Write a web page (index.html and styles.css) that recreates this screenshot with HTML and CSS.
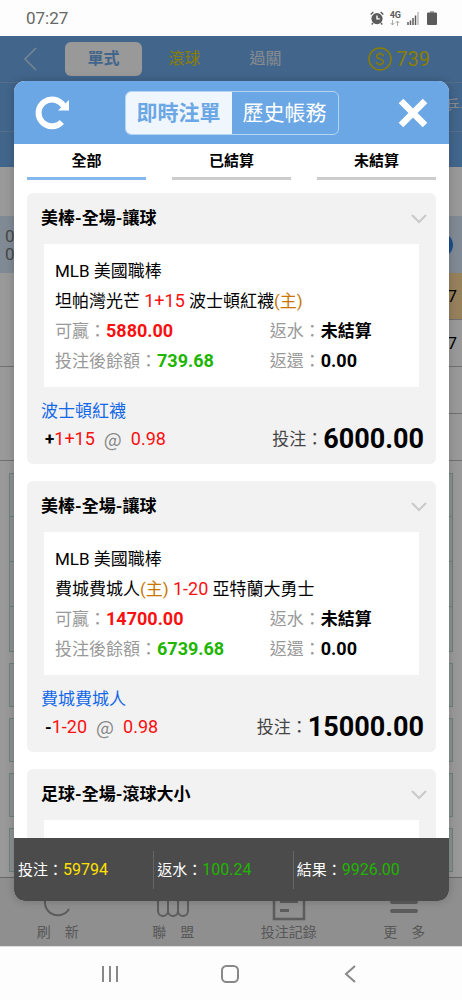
FILE: index.html
```html
<!DOCTYPE html>
<html lang="zh-Hant">
<head>
<meta charset="utf-8">
<meta name="viewport" content="width=device-width, initial-scale=1">
<title>即時注單</title>
<link rel="stylesheet" href="styles.css">
</head>
<body>
<header class="status">
  <time>07:27</time>
  <div class="status-icons">
    <svg class="alarm" viewBox="0 0 14 14"><circle cx="7" cy="7.6" r="5.6" fill="#5b5b5b"/><path d="M.7 3.6 3.4 1M13.3 3.6 10.6 1M3 12l-1.3 1.5M11 12l1.3 1.5" stroke="#5b5b5b" stroke-width="1.4"/><path d="M7 4.4v3.5h2.8" fill="none" stroke="#fff" stroke-width="1.4"/></svg>
    <div class="network"><b>4G</b><svg viewBox="0 0 10 6"><path d="M2.5 0v5M.7 3l1.8 2 1.8-2M7.5 6V1M5.7 3l1.8-2 1.8 2" fill="none" stroke="#aaa"/></svg></div>
    <svg class="signal" viewBox="0 0 12 13"><path d="M1 13v-3M3.5 13V8.500M6 13V6M8.500 13V3.500" stroke="#5b5b5b" stroke-width="1.5"/><path d="M11 13V0" stroke="#bbb" stroke-width="1.500"/></svg>
    <svg class="battery" viewBox="0 0 10 14"><rect x="3" width="4" height="2" fill="#aaa"/><rect y="1.500" width="10" height="12.500" rx="1" fill="#5b5b5b"/></svg>
  </div>
</header>

<main class="app">
  <div class="page">
    <nav class="topbar">
      <button class="back" aria-label="返回"><svg viewBox="0 0 14 24"><path d="M13 1 2 12l11 11" fill="none" stroke="#c9def5" stroke-width="1.500"/></svg></button>
      <button class="mode mode-on">單式</button>
      <button class="mode mode-live">滾球</button>
      <button class="mode">過關</button>
      <div class="coins"><svg viewBox="0 0 24 24"><circle cx="12" cy="12" r="11" fill="none" stroke="#e6d200" stroke-width="1.500"/><path d="M15.500 9.300c0-3.300-7-3.300-7 0 0 3.300 7 2 7 5.400 0 3.500-7.200 3.500-7.200-.2M12 5v2M12 17v2" fill="none" stroke="#e6d200" stroke-width="1.400"/></svg>739</div>
    </nav>
    <div class="sports">乒乓</div>
    <div class="subbar"></div>
    <div class="blank"></div>
    <div class="match"><span>0<br>0</span><i class="dot"></i></div>
    <div class="odds">
      <div class="team"></div><div class="odd picked">7</div><div class="odd">7</div>
      <div class="team"></div><div class="odd"></div><div class="odd"></div>
    </div>
    <div class="markets">
      <div class="market"><p></p><p></p><p></p><p></p></div>
      <div class="market"><p></p></div>
      <div class="market"><p></p></div>
      <div class="market"><p></p></div>
      <div class="market"><p></p></div>
    </div>
    <nav class="tabbar">
      <button><svg viewBox="0 0 36 34"><path d="M27 5A13 13 0 1 0 29 21M28 0v7h-7" fill="none" stroke="#999" stroke-width="2"/></svg>刷　新</button>
      <button><svg viewBox="0 0 36 34"><g fill="none" stroke="#999" stroke-width="2"><rect x="3" y="2" width="10" height="26" rx="5"/><rect x="13" y="2" width="10" height="26" rx="5"/><rect x="23" y="2" width="10" height="26" rx="5"/></g></svg>聯　盟</button>
      <button><svg viewBox="0 0 36 34"><path d="M3 2h30v29H3z" fill="none" stroke="#999" stroke-width="2.500"/><path d="M9 13.500h18M9 22.500h9" stroke="#999" stroke-width="3"/></svg>投注記錄</button>
      <button><svg viewBox="0 0 36 34"><path d="M6 5h24M6 14h24M6 23h24" stroke="#999" stroke-width="4" stroke-linecap="round"/></svg>更　多</button>
    </nav>
  </div>
  <div class="shade"></div>

  <section class="dialog" role="dialog" aria-label="即時注單">
    <header class="dialog-head">
      <button class="icon-btn" aria-label="重新整理"><svg viewBox="0 0 34 34"><path d="M26.800 26A13.400 13.400 0 1 1 28.500 10" fill="none" stroke="#fff" stroke-width="6"/><path d="M34 4v10.500H23z" fill="#fff"/></svg></button>
      <div class="segments"><button class="on">即時注單</button><button>歷史帳務</button></div>
      <button class="icon-btn close" aria-label="關閉"><svg viewBox="0 0 30 30"><path d="m3 3 24 24M27 3 3 27" stroke="#fff" stroke-width="6.500"/></svg></button>
    </header>
    <nav class="filters"><button class="on">全部</button><button>已結算</button><button>未結算</button></nav>

    <div class="list">
      <article class="card">
        <header><h2>美棒-全場-讓球</h2><svg viewBox="0 0 16 10"><path d="m1 1 7 7 7-7" fill="none" stroke="#c9c9c9" stroke-width="2"/></svg></header>
        <div class="detail">
          <p class="wide">MLB 美國職棒</p>
          <p class="wide">坦帕灣光芒 <span class="red">1+15</span> 波士頓紅襪<span class="home">(主)</span></p>
          <p class="label">可贏：<b class="red">5880.00</b></p><p class="label">返水：<b>未結算</b></p>
          <p class="label">投注後餘額：<b class="green">739.68</b></p><p class="label">返還：<b class="num">0.00</b></p>
        </div>
        <footer>
          <div><p class="pick">波士頓紅襪</p><p class="price"><b>+</b><span class="red">1+15</span><span class="at">@</span><span class="red">0.98</span></p></div>
          <p class="stake">投注：<b>6000.00</b></p>
        </footer>
      </article>
      <article class="card">
        <header><h2>美棒-全場-讓球</h2><svg viewBox="0 0 16 10"><path d="m1 1 7 7 7-7" fill="none" stroke="#c9c9c9" stroke-width="2"/></svg></header>
        <div class="detail">
          <p class="wide">MLB 美國職棒</p>
          <p class="wide">費城費城人<span class="home">(主)</span> <span class="red">1-20</span> 亞特蘭大勇士</p>
          <p class="label">可贏：<b class="red">14700.00</b></p><p class="label">返水：<b>未結算</b></p>
          <p class="label">投注後餘額：<b class="green">6739.68</b></p><p class="label">返還：<b class="num">0.00</b></p>
        </div>
        <footer>
          <div><p class="pick">費城費城人</p><p class="price"><b>-</b><span class="red">1-20</span><span class="at">@</span><span class="red">0.98</span></p></div>
          <p class="stake">投注：<b>15000.00</b></p>
        </footer>
      </article>
      <article class="card">
        <header><h2>足球-全場-滾球大小</h2><svg viewBox="0 0 16 10"><path d="m1 1 7 7 7-7" fill="none" stroke="#c9c9c9" stroke-width="2"/></svg></header>
        <div class="detail"></div>
      </article>
    </div>

    <footer class="totals">
      <div>投注：<span class="yellow">59794</span></div>
      <div>返水：<span class="gain">100.24</span></div>
      <div>結果：<span class="gain">9926.00</span></div>
    </footer>
  </section>
</main>

<nav class="system">
  <button aria-label="最近"><svg viewBox="0 0 18 18"><path d="M2 1v16M9 1v16M16 1v16" stroke="#888" stroke-width="2"/></svg></button>
  <button aria-label="主畫面"><svg viewBox="0 0 18 18"><rect x="1" y="1" width="16" height="16" rx="4.500" fill="none" stroke="#888" stroke-width="2"/></svg></button>
  <button aria-label="返回"><svg viewBox="0 0 18 18"><path d="M14 1 5 9l9 8" fill="none" stroke="#888" stroke-width="2"/></svg></button>
</nav>
</body>
</html>
```

FILE: styles.css
```css
* { box-sizing: border-box; }
body {
  margin: 0;
  height: 100vh;
  display: flex;
  flex-direction: column;
  overflow: hidden;
  background: #fdfdfd;
  color: #000;
  font: 17px/30px Roboto, "Noto Sans CJK TC", sans-serif;
}
button {
  border: 0;
  padding: 0;
  margin: 0;
  background: none;
  color: inherit;
  font: inherit;
}
p, h2 { margin: 0; }
svg { display: block; flex: none; }

.status {
  flex: none;
  height: 36px;
  display: flex;
  align-items: center;
  justify-content: space-between;
  padding: 0 25px 0 26px;
  color: #666;
}
.status-icons { display: flex; align-items: center; gap: 6px; }
.alarm { width: 14px; height: 14px; }
.network { font-size: 9px; line-height: 10px; color: #5b5b5b; }
.network svg { width: 10px; height: 6px; }
.signal { width: 12px; height: 13px; }
.battery { width: 10px; height: 14px; margin-left: 2px; }

.app { position: relative; flex: 1; min-height: 0; }
.page { height: 100%; display: flex; flex-direction: column; background: #fff; overflow: hidden; }
.shade { position: absolute; inset: 0; background: rgba(0, 0, 0, .4); }

.topbar {
  flex: none;
  height: 46px;
  display: flex;
  align-items: center;
  gap: 4px;
  padding-right: 32px;
  background: #6ea9e8;
  color: #e0e8f0;
}
.back { width: 61px; padding-left: 23px; }
.back svg { width: 14px; height: 24px; }
.mode { width: 77px; height: 34px; border-radius: 6px; font-size: 16px; line-height: 34px; }
.mode-on { background: #fff; color: #6ea9e8; font-weight: 700; }
.mode-live { color: #e6d200; }
.coins { display: flex; align-items: center; gap: 4px; margin-left: auto; color: #e6d200; font-size: 20px; }
.coins svg { width: 24px; height: 24px; }
.sports {
  flex: none;
  height: 49px;
  border-top: 1px solid #8db8e8;
  background: #6ea9e8;
  color: #e0e8f0;
  padding-left: 445px;
  font-size: 15px;
  line-height: 46px;
  white-space: nowrap;
}
.subbar { flex: none; height: 36px; border-top: 1px solid #8db8e8; background: #6ea9e8; }
.blank { flex: none; height: 49px; }
.match {
  flex: none;
  height: 57px;
  display: flex;
  align-items: center;
  justify-content: space-between;
  padding: 0 9px 0 5px;
  background: #d6e7f8;
  color: #777;
  line-height: 18px;
}
.dot { width: 24px; height: 24px; border-radius: 50%; background: #2d83e6; }
.odds { flex: none; display: grid; grid-template: repeat(4, 47px) / 1fr 200px; }
.team { grid-row: span 2; border-bottom: 1px solid #bbb; }
.odd { border-bottom: 1px solid #bbb; padding-right: 5px; text-align: right; line-height: 47px; }
.picked { background: #fcd699; }
.markets { flex: 1; min-height: 0; display: flex; flex-direction: column; gap: 11px; padding: 12px 9px 0; border-bottom: 1px solid #aaa; }
.market { flex: none; border: 1px solid #b6d7ce; background: #eaf4f2; }
.market p { height: 42px; }
.market p + p { height: 45px; border-top: 1px solid #b6d7ce; }
.tabbar { flex: none; height: 68px; display: grid; grid-template-columns: repeat(4, 1fr); background: #eee; color: #939393; font-size: 14px; line-height: 20px; }
.tabbar button { display: flex; flex-direction: column; align-items: center; padding-top: 10px; }
.tabbar svg { width: 36px; height: 34px; }

.dialog {
  position: absolute;
  inset: 45px 13px 45px 14px;
  display: flex;
  flex-direction: column;
  overflow: hidden;
  border-radius: 11px;
  background: #fff;
  box-shadow: 0 0 10px rgba(0, 0, 0, .2);
}
.dialog-head {
  flex: none;
  height: 63px;
  display: flex;
  align-items: center;
  justify-content: space-between;
  padding: 0 21px;
  background: #6ba7e5;
}
.icon-btn svg { width: 34px; height: 34px; }
.icon-btn.close { width: 34px; display: flex; justify-content: flex-end; }
.icon-btn.close svg { width: 30px; height: 30px; }
.segments { display: flex; border: 1px solid #b5d3f3; border-radius: 6px; overflow: hidden; color: #fff; }
.segments button { width: 106px; height: 42px; font-size: 21px; line-height: 42px; }
.segments .on { background: #f0f6fd; color: #6ba7e5; font-weight: 700; }

.filters { flex: none; display: grid; grid-template-columns: repeat(3, 1fr); gap: 26px; padding: 0 13px; }
.filters button { height: 36px; padding-top: 2px; border-bottom: 3px solid #ccc; font-size: 15px; line-height: 31px; font-weight: 700; }
.filters .on { border-color: #83b7ee; }

.list { flex: 1; min-height: 0; overflow: auto; scrollbar-width: none; display: flex; flex-direction: column; gap: 17px; padding: 13px 13px 0; }
.card { flex: none; border-radius: 6px; background: #f2f2f2; padding-bottom: 11px; }
.card header { display: flex; align-items: center; justify-content: space-between; height: 51px; padding: 0 9px 0 14px; }
.card header svg { width: 16px; height: 10px; }
h2 { font-size: 17px; line-height: 48px; padding-bottom: 2px; }
.detail { display: grid; grid-template-columns: 59fr 41fr; margin: 0 17px; padding: 12px 0 11px 11px; background: #fff; }
.wide { grid-column: 1 / -1; }
.label { color: #999; white-space: nowrap; }
.label b { color: #000; }
.label .red, .red { color: #f91010; font-size: 18px; }
.label .green { color: #20b500; font-size: 18px; }
.num { font-size: 18px; }
.home { color: #c77700; }
.yellow { color: #ffe100; }
.gain { color: #20b500; }
.card footer { display: flex; align-items: flex-end; justify-content: space-between; padding: 10px 12px 0 14px; line-height: 28px; }
.pick { color: #1268e8; }
.price { display: flex; padding-left: 4px; }
.at { margin: 0 9px; color: #888; font-family: "Noto Sans CJK TC", sans-serif; font-size: 19px; }
.stake { display: flex; align-items: center; height: 28px; color: #444; }
.stake b { color: #000; font-size: 27px; }

.totals {
  flex: none;
  height: 63px;
  display: grid;
  grid-template-columns: repeat(3, 1fr);
  align-items: center;
  padding-right: 17px;
  background: #4b4b4b;
  color: #fff;
  font-size: 15px;
}
.totals div { padding-left: 4px; line-height: 38px; }
.totals div + div { padding-left: 3px; border-left: 1px solid #666; }
.totals span { font-size: 16px; }

.system { flex: none; height: 54px; display: grid; grid-template-columns: repeat(3, 1fr); align-items: center; padding: 0 52px 0 50px; border-top: 1px solid #ddd; }
.system button { display: flex; justify-content: center; }
.system svg { width: 18px; height: 18px; }
```
